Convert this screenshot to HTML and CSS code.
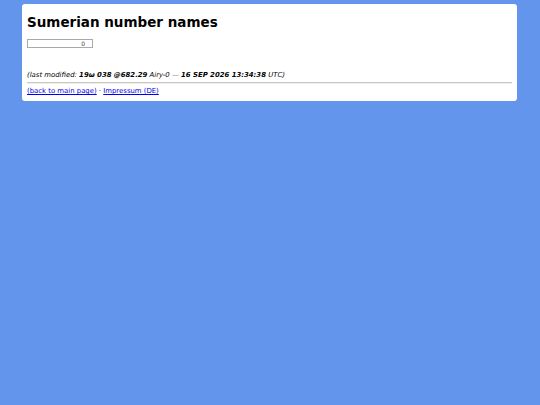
FILE: index.html
```html
<!DOCTYPE html>
<html>
<head>
<meta charset="utf-8">
<link rel="stylesheet" href="styles.css">
</head>
<body>
<div class="card">
  <h1 class="title">Sumerian number names</h1>
  <div class="form"><input class="num" type="text" value="0"></div>
  <div class="output"></div>
  <p class="modified">(last modified: <b>19ω 038 @682.29</b> Airy-0 — <b>16 SEP 2026 13:34:38</b> UTC)</p>
  <hr class="rule">
  <p class="links"><a href="#">(back to main page)</a> · <a href="#">Impressum (DE)</a></p>
</div>
</body>
</html>
```
FILE: styles.css
```css
html, body { margin: 0; padding: 0; }
body {
  background: #6495ed;
  font-family: "DejaVu Sans", Verdana, sans-serif;
  height: 405px;
}
.card {
  background: #fff;
  margin: 4px 23px 0 22px;
  padding: 5px 5px 5px 5px;
  border-radius: 3px;
}
.title {
  font-size: 13.5px;
  font-weight: bold;
  margin: 5px 0 9px 0;
  line-height: 16px;
}
.form { height: 10px; }
.num {
  box-sizing: border-box;
  width: 66px;
  height: 9px;
  border: 1px solid #aaa;
  font-family: "DejaVu Sans", sans-serif;
  font-size: 6px;
  text-align: right;
  padding: 0 7px 0 0;
  margin: 0;
  color: #444;
  background: #fff;
  display: block;
}
.output { height: 21px; }
.modified {
  font-size: 6.9px;
  font-style: italic;
  margin: 0;
  line-height: 10px;
}
.rule {
  border: 0;
  border-top: 1px solid #c8c8c8;
  border-bottom: 1px solid #eee;
  margin: 2px 0 2px 0;
}
.links {
  font-size: 6.9px;
  margin: 0;
  line-height: 10px;
}
.links a { color: #00e; }
```
